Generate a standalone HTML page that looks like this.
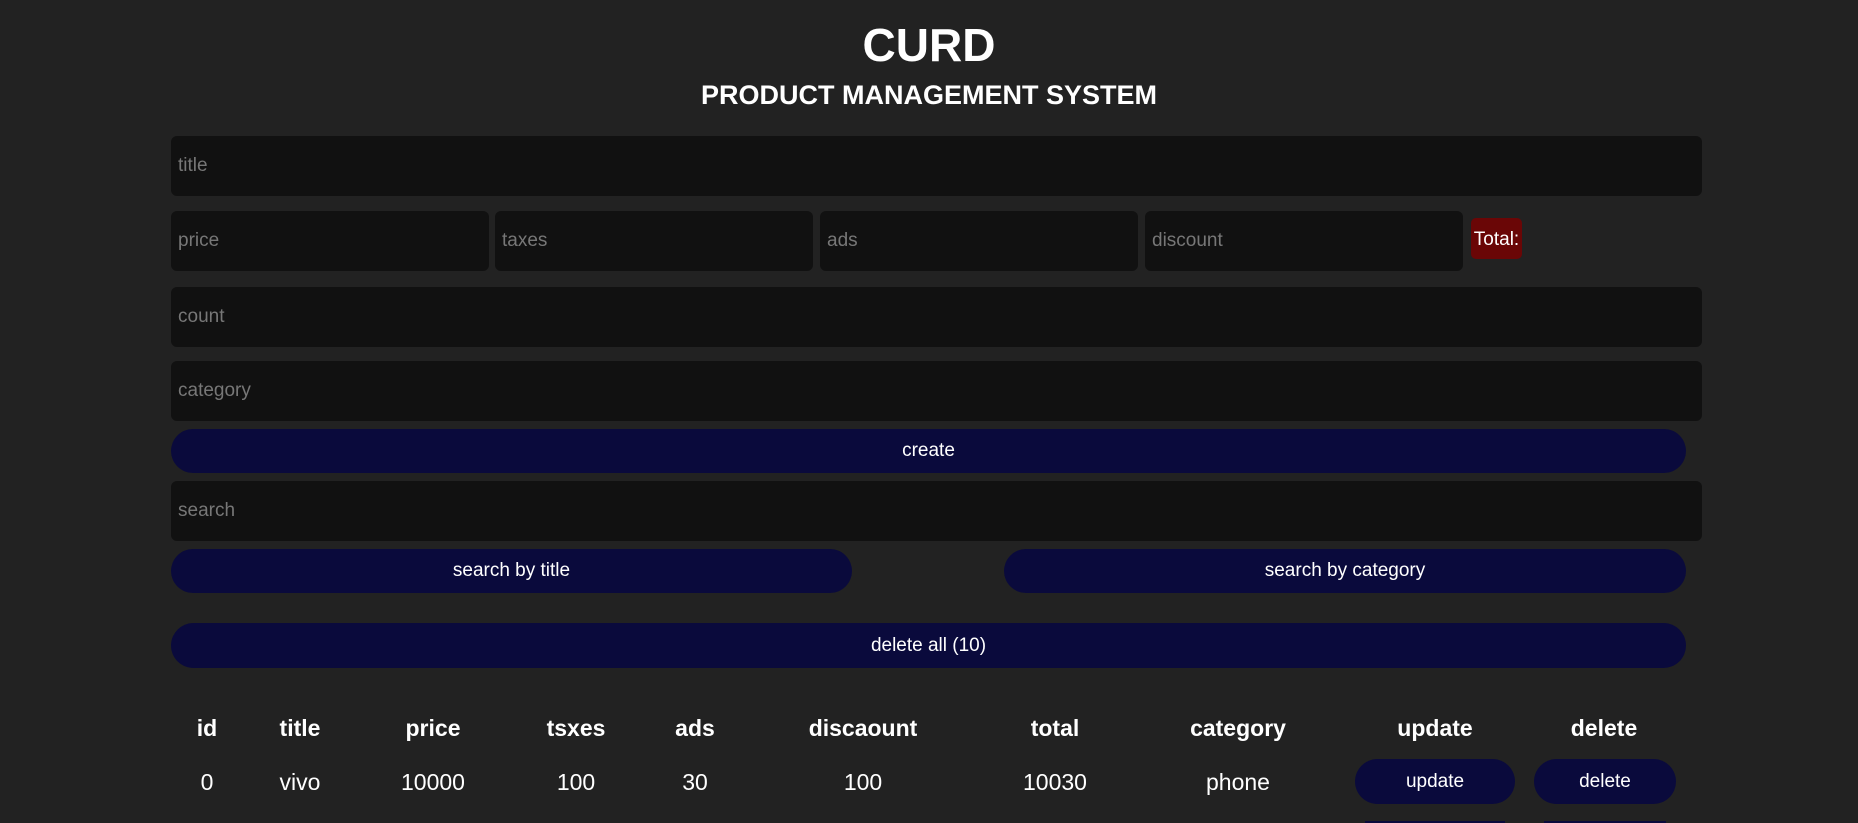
<!DOCTYPE html>
<html style="overflow:hidden;height:823px"><head><style>
body{margin:0;width:1858px;height:823px;background:#222;overflow:hidden;font-family:"Liberation Sans",sans-serif;color:#fff;position:relative}
.a{position:absolute}
.in{position:absolute;background:#111;border-radius:6px;color:#777;font-size:19px;box-sizing:border-box;padding-left:7px;display:flex;align-items:center}
.bt{position:absolute;background:#0a0a3c;border-radius:24px;color:#fff;font-size:19px;display:flex;align-items:center;justify-content:center}
.h{position:absolute;font-weight:bold;font-size:23px;transform:translateX(-50%);top:715px}
.c{position:absolute;font-size:23px;transform:translateX(-50%);top:769px}
</style></head><body>
<div class="a" style="left:0;width:1858px;text-align:center;top:18px;font-size:46px;font-weight:bold">CURD</div>
<div class="a" style="left:0;width:1858px;text-align:center;top:80px;font-size:27px;font-weight:bold">PRODUCT MANAGEMENT SYSTEM</div>
<div class="in" style="left:171px;top:136px;width:1531px;height:60px">title</div>
<div class="in" style="left:171px;top:211px;width:318px;height:60px">price</div>
<div class="in" style="left:495px;top:211px;width:318px;height:60px">taxes</div>
<div class="in" style="left:820px;top:211px;width:318px;height:60px">ads</div>
<div class="in" style="left:1145px;top:211px;width:318px;height:60px">discount</div>
<div class="a" style="left:1471px;top:218px;width:51px;height:41px;background:#6a0606;border-radius:5px;font-size:19px;display:flex;align-items:center;justify-content:center;padding-top:3px;box-sizing:border-box">Total:</div>
<div class="in" style="left:171px;top:287px;width:1531px;height:60px">count</div>
<div class="in" style="left:171px;top:361px;width:1531px;height:60px">category</div>
<div class="bt" style="left:171px;top:429px;width:1515px;height:44px">create</div>
<div class="in" style="left:171px;top:481px;width:1531px;height:60px">search</div>
<div class="bt" style="left:171px;top:549px;width:681px;height:44px">search by title</div>
<div class="bt" style="left:1004px;top:549px;width:682px;height:44px">search by category</div>
<div class="bt" style="left:171px;top:623px;width:1515px;height:45px">delete all (10)</div>
<div class="h" style="left:207px">id</div>
<div class="h" style="left:300px">title</div>
<div class="h" style="left:433px">price</div>
<div class="h" style="left:576px">tsxes</div>
<div class="h" style="left:695px">ads</div>
<div class="h" style="left:863px">discaount</div>
<div class="h" style="left:1055px">total</div>
<div class="h" style="left:1238px">category</div>
<div class="h" style="left:1435px">update</div>
<div class="h" style="left:1604px">delete</div>
<div class="c" style="left:207px">0</div>
<div class="c" style="left:300px">vivo</div>
<div class="c" style="left:433px">10000</div>
<div class="c" style="left:576px">100</div>
<div class="c" style="left:695px">30</div>
<div class="c" style="left:863px">100</div>
<div class="c" style="left:1055px">10030</div>
<div class="c" style="left:1238px">phone</div>
<div class="bt" style="left:1355px;top:759px;width:160px;height:45px">update</div>
<div class="bt" style="left:1534px;top:759px;width:142px;height:45px">delete</div>
<div class="bt" style="left:1365px;top:821px;width:140px;height:2px;border-radius:0"></div>
<div class="bt" style="left:1544px;top:821px;width:122px;height:2px;border-radius:0"></div>
</body></html>
